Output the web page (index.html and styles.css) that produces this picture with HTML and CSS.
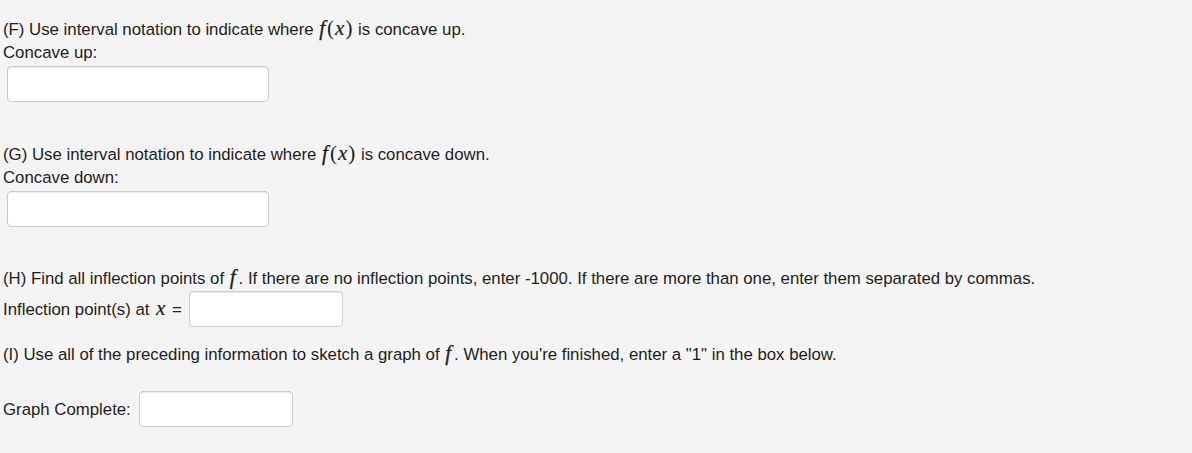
FILE: index.html
```html
<!DOCTYPE html>
<html>
<head>
<meta charset="utf-8">
<link rel="stylesheet" href="styles.css">
</head>
<body>
<div class="page">
  <section class="part part-f">
    <div class="line">(F) Use interval notation to indicate where <span class="math"><i class="mf">f</i>(<i class="mx">x</i>)</span> is concave up.</div>
    <div class="line">Concave up:</div>
    <input class="box wide" type="text">
  </section>
  <section class="part part-g">
    <div class="line">(G) Use interval notation to indicate where <span class="math"><i class="mf">f</i>(<i class="mx">x</i>)</span> is concave down.</div>
    <div class="line">Concave down:</div>
    <input class="box wide" type="text">
  </section>
  <section class="part part-h">
    <div class="line">(H) Find all inflection points of <span class="math"><i class="mf">f</i></span>. If there are no inflection points, enter -1000. If there are more than one, enter them separated by commas.</div>
    <div class="row row-h"><span>Inflection point(s) at <span class="math"><i class="mx">x</i></span> =</span><input class="box narrow" type="text"></div>
  </section>
  <section class="part part-i">
    <div class="line">(I) Use all of the preceding information to sketch a graph of <span class="math"><i class="mf">f</i></span>. When you're finished, enter a "1" in the box below.</div>
    <div class="row row-i"><span>Graph Complete:</span><input class="box narrow" type="text"></div>
  </section>
</div>
</body>
</html>
```
FILE: styles.css
```css
html, body {
  margin: 0;
  padding: 0;
  background: #f4f4f4;
}
body {
  font-family: "Liberation Sans", Arial, sans-serif;
  font-size: 16.8px;
  color: #1e1e1e;
}
.page {
  padding: 17.5px 0 0 3px;
}
.line {
  line-height: 23px;
  height: 23px;
  white-space: nowrap;
}
.math {
  font-family: "Liberation Serif", "Times New Roman", serif;
  font-size: 21px;
  line-height: 0;
  padding: 0 1px;
}
.math i {
  font-style: italic;
}
.mf {
  margin-right: 2px;
  -webkit-text-stroke: 0.3px #1e1e1e;
}
.mx {
  margin: 0 1px;
  -webkit-text-stroke: 0.2px #1e1e1e;
}
.box {
  display: block;
  box-sizing: border-box;
  height: 36px;
  border: 1px solid #ccc;
  border-radius: 4px;
  background: #fff;
  box-shadow: inset 0 1px 1px rgba(0,0,0,0.075);
  margin: 0;
  padding: 4px 6px;
  font: inherit;
}
.wide {
  width: 262px;
  margin: 2.5px 0 0 4px;
}
.narrow {
  width: 154px;
  margin-left: 8px;
}
.row-h .narrow {
  margin-left: 7px;
}
.part-g {
  margin-top: 40.5px;
}
.part-h {
  margin-top: 39.5px;
}
.row {
  display: flex;
  align-items: center;
  white-space: nowrap;
  line-height: 23px;
}
.row-h {
  margin-top: 1.5px;
}
.part-i {
  margin-top: 15.5px;
}
.row-i {
  margin-top: 25.5px;
}
```
